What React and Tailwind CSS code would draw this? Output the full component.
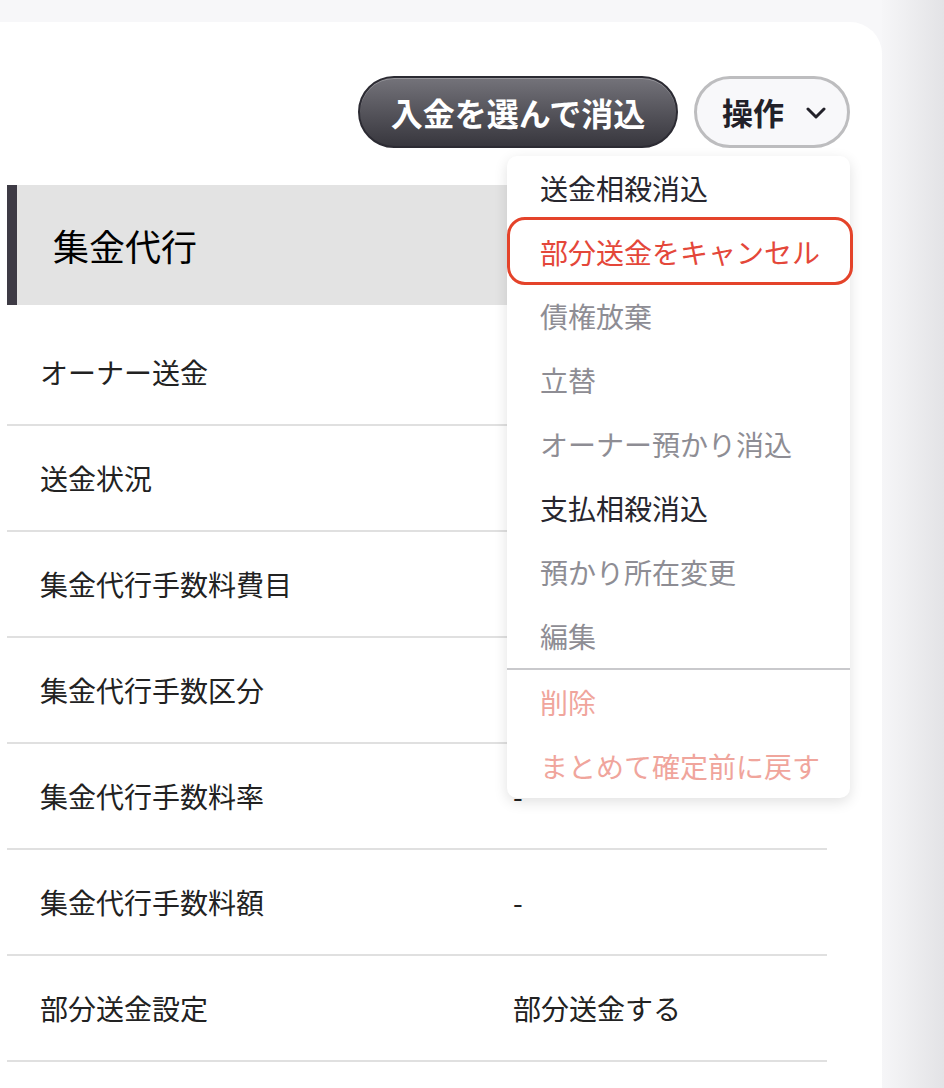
const rows = [
    { label: 'オーナー送金', value: '-' },
    { label: '送金状況', value: '-' },
    { label: '集金代行手数料費目', value: '-' },
    { label: '集金代行手数区分', value: '-' },
    { label: '集金代行手数料率', value: '-' },
    { label: '集金代行手数料額', value: '-' },
    { label: '部分送金設定', value: '部分送金する' },
];

const menuItems = [
    { label: '送金相殺消込', tone: 'text-[#27262e]' },
    { label: '部分送金をキャンセル', tone: 'text-[#e4473a]', selected: true },
    { label: '債権放棄', tone: 'text-[#8e8d94]' },
    { label: '立替', tone: 'text-[#8e8d94]' },
    { label: 'オーナー預かり消込', tone: 'text-[#8e8d94]' },
    { label: '支払相殺消込', tone: 'text-[#27262e]' },
    { label: '預かり所在変更', tone: 'text-[#8e8d94]' },
    { label: '編集', tone: 'text-[#8e8d94]' },
];

const dangerItems = ['削除', 'まとめて確定前に戻す'];

const ActionMenu = () => (
    <div className="absolute top-[80px] right-0 w-[343px] rounded-[10px] bg-white shadow-[0_4px_14px_rgba(0,0,0,0.12)] z-10">
        {menuItems.map((item) => (
            <div key={item.label} className="relative h-16 flex items-center pl-[33px]">
                <span className={`text-[28px] leading-none ${item.tone}`}>{item.label}</span>
                {item.selected && (
                    <div className="absolute left-0 -right-[3px] top-[-3px] bottom-[-1px] rounded-[18px] border-[3px] border-[#e4432a]" />
                )}
            </div>
        ))}
        <div className="h-[2px] bg-[#c9c9cc]" />
        {dangerItems.map((label) => (
            <div key={label} className="h-16 flex items-center pl-[33px]">
                <span className="text-[28px] leading-none text-[#f0a59c]">{label}</span>
            </div>
        ))}
    </div>
);

export default function App() {
    return (
        <div
            className="flex w-[944px] h-[1088px] overflow-hidden bg-[#f7f7f9]"
            style={{ fontFamily: '"Noto Sans CJK JP", "Noto Sans", sans-serif' }}
        >
            <div className="w-[882px] pt-[22px] flex flex-col">
                <div className="flex-1 bg-white rounded-tr-[32px] pl-[7px] pr-[32px] pt-[54px]">
                    {/* toolbar */}
                    <div className="relative flex justify-end gap-4">
                        <button className="h-[72px] w-[320px] rounded-full border-2 border-[#2c2b33] bg-gradient-to-b from-[#74737a] to-[#38373e] text-white text-[32px] font-bold shadow-[inset_0_1px_0_rgba(255,255,255,0.25)]">
                            入金を選んで消込
                        </button>
                        <button className="h-[72px] w-[156px] rounded-full border-[3px] border-[#bdbdbf] bg-[#f8f8fa] flex items-center justify-center gap-[22px] pl-[4px] text-[31px] font-bold text-[#222129]">
                            <span>操作</span>
                            <svg width="20" height="12" viewBox="0 0 20 12" fill="none" className="mt-[2px]">
                                <path d="M2 2l8 8 8-8" stroke="#222129" strokeWidth="3" strokeLinecap="round" strokeLinejoin="round" />
                            </svg>
                        </button>
                        <ActionMenu />
                    </div>

                    {/* section */}
                    <div className="mt-[37px] w-[820px]">
                        <div className="h-[120px] bg-[#e3e3e3] border-l-[10px] border-[#3e3b45] flex items-center pl-[36px]">
                            <h2 className="text-[36px] text-black leading-none">集金代行</h2>
                        </div>
                        <div className="mt-[15px]">
                            {rows.map((row) => (
                                <div key={row.label} className="h-[106px] flex items-center border-b-2 border-[#e0e0e0]">
                                    <div className="w-[506px] pl-[33px] text-[28px] text-[#222]">{row.label}</div>
                                    <div className="text-[28px] text-[#222]">{row.value}</div>
                                </div>
                            ))}
                        </div>
                    </div>
                </div>
            </div>
            <div className="flex-1 bg-gradient-to-r from-[#f6f6f8] to-[#e3e3e6]" />
        </div>
    );
}
